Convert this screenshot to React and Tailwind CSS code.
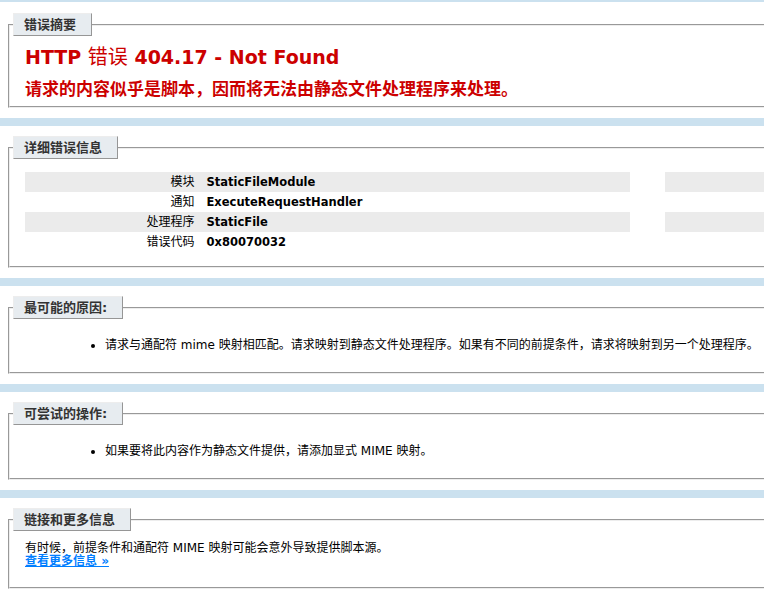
const bodyFont = { fontFamily: '"DejaVu Sans", "Noto Sans CJK SC", sans-serif' }

function Legend({ children }) {
  return (
    <legend
      className="ml-[-12px] border border-t-[#ededed] border-l-[#ededed] border-r-[#969696] border-b-[#969696]
                 bg-[#e7ecf0] pl-[10px] pr-[15px] py-[4px] text-[13px] leading-[13px] font-bold text-[#333333]"
    >
      {children}
    </legend>
  )
}

function Section({ title, first, fieldsetClass, children }) {
  return (
    <div className={`bg-white pl-[8px] pb-[10px] ${first ? "mt-[2px] pt-[11px]" : "mt-[8px] pt-[10px]"}`}>
      <fieldset
        className={`mr-[-40px] border-2 [border-style:groove] border-[#ededed] px-[15px] ${fieldsetClass}`}
      >
        <Legend>{title}</Legend>
        {children}
      </fieldset>
    </div>
  )
}

const details = [
  ["模块", "StaticFileModule"],
  ["通知", "ExecuteRequestHandler"],
  ["处理程序", "StaticFile"],
  ["错误代码", "0x80070032"],
]

export default function App() {
  return (
    <div className="h-[592px] overflow-hidden bg-[#cbe1ef] text-[12px] text-black" style={bodyFont}>
      <Section title="错误摘要" first fieldsetClass="pb-[7px]">
        <h3 className="mt-[10px] h-[22px] text-[19px] leading-[22px] font-bold text-[#cc0000] whitespace-nowrap">
          HTTP <span className="text-[20px] leading-none font-normal">错误</span> 404.17 - Not Found
        </h3>
        <h4 className="mt-[11px] text-[17px] leading-[20px] font-bold text-[#cc0000] whitespace-nowrap">
          请求的内容似乎是脚本，因而将无法由静态文件处理程序来处理。
        </h4>
      </Section>

      <Section title="详细错误信息" fieldsetClass="pb-[14px]">
        <div className="mt-[13px] flex gap-[35px]">
          <div className="w-[605px] shrink-0">
            {details.map(([label, value], i) => (
              <div key={label} className={`flex h-[20px] leading-[20px] ${i % 2 === 0 ? "bg-[#ebebeb]" : ""}`}>
                <div className="w-[30%] pr-[12px] text-right">{label}</div>
                <div className="flex-1 text-[11.5px] font-bold">{value}</div>
              </div>
            ))}
          </div>
          <div className="flex-1">
            {details.map(([label], i) => (
              <div key={label} className={`h-[20px] ${i % 2 === 0 ? "bg-[#ebebeb]" : ""}`} />
            ))}
          </div>
        </div>
      </Section>

      <Section title="最可能的原因:" fieldsetClass="pb-[20px]">
        <ul className="mt-[19px] ml-[40px] pl-[40px] list-disc leading-[14px] whitespace-nowrap">
          <li>请求与通配符 mime 映射相匹配。请求映射到静态文件处理程序。如果有不同的前提条件，请求将映射到另一个处理程序。</li>
        </ul>
      </Section>

      <Section title="可尝试的操作:" fieldsetClass="pb-[20px]">
        <ul className="mt-[19px] ml-[40px] pl-[40px] list-disc leading-[14px] whitespace-nowrap">
          <li>如果要将此内容作为静态文件提供，请添加显式 MIME 映射。</li>
        </ul>
      </Section>

      <Section title="链接和更多信息" fieldsetClass="pb-[19px]">
        <p className="mt-[11px] leading-[13px] whitespace-nowrap">
          有时候，前提条件和通配符 MIME 映射可能会意外导致提供脚本源。
          <br />
          <a href="#" className="font-bold text-[#007eff] underline">
            查看更多信息 &raquo;
          </a>
        </p>
      </Section>
    </div>
  )
}
